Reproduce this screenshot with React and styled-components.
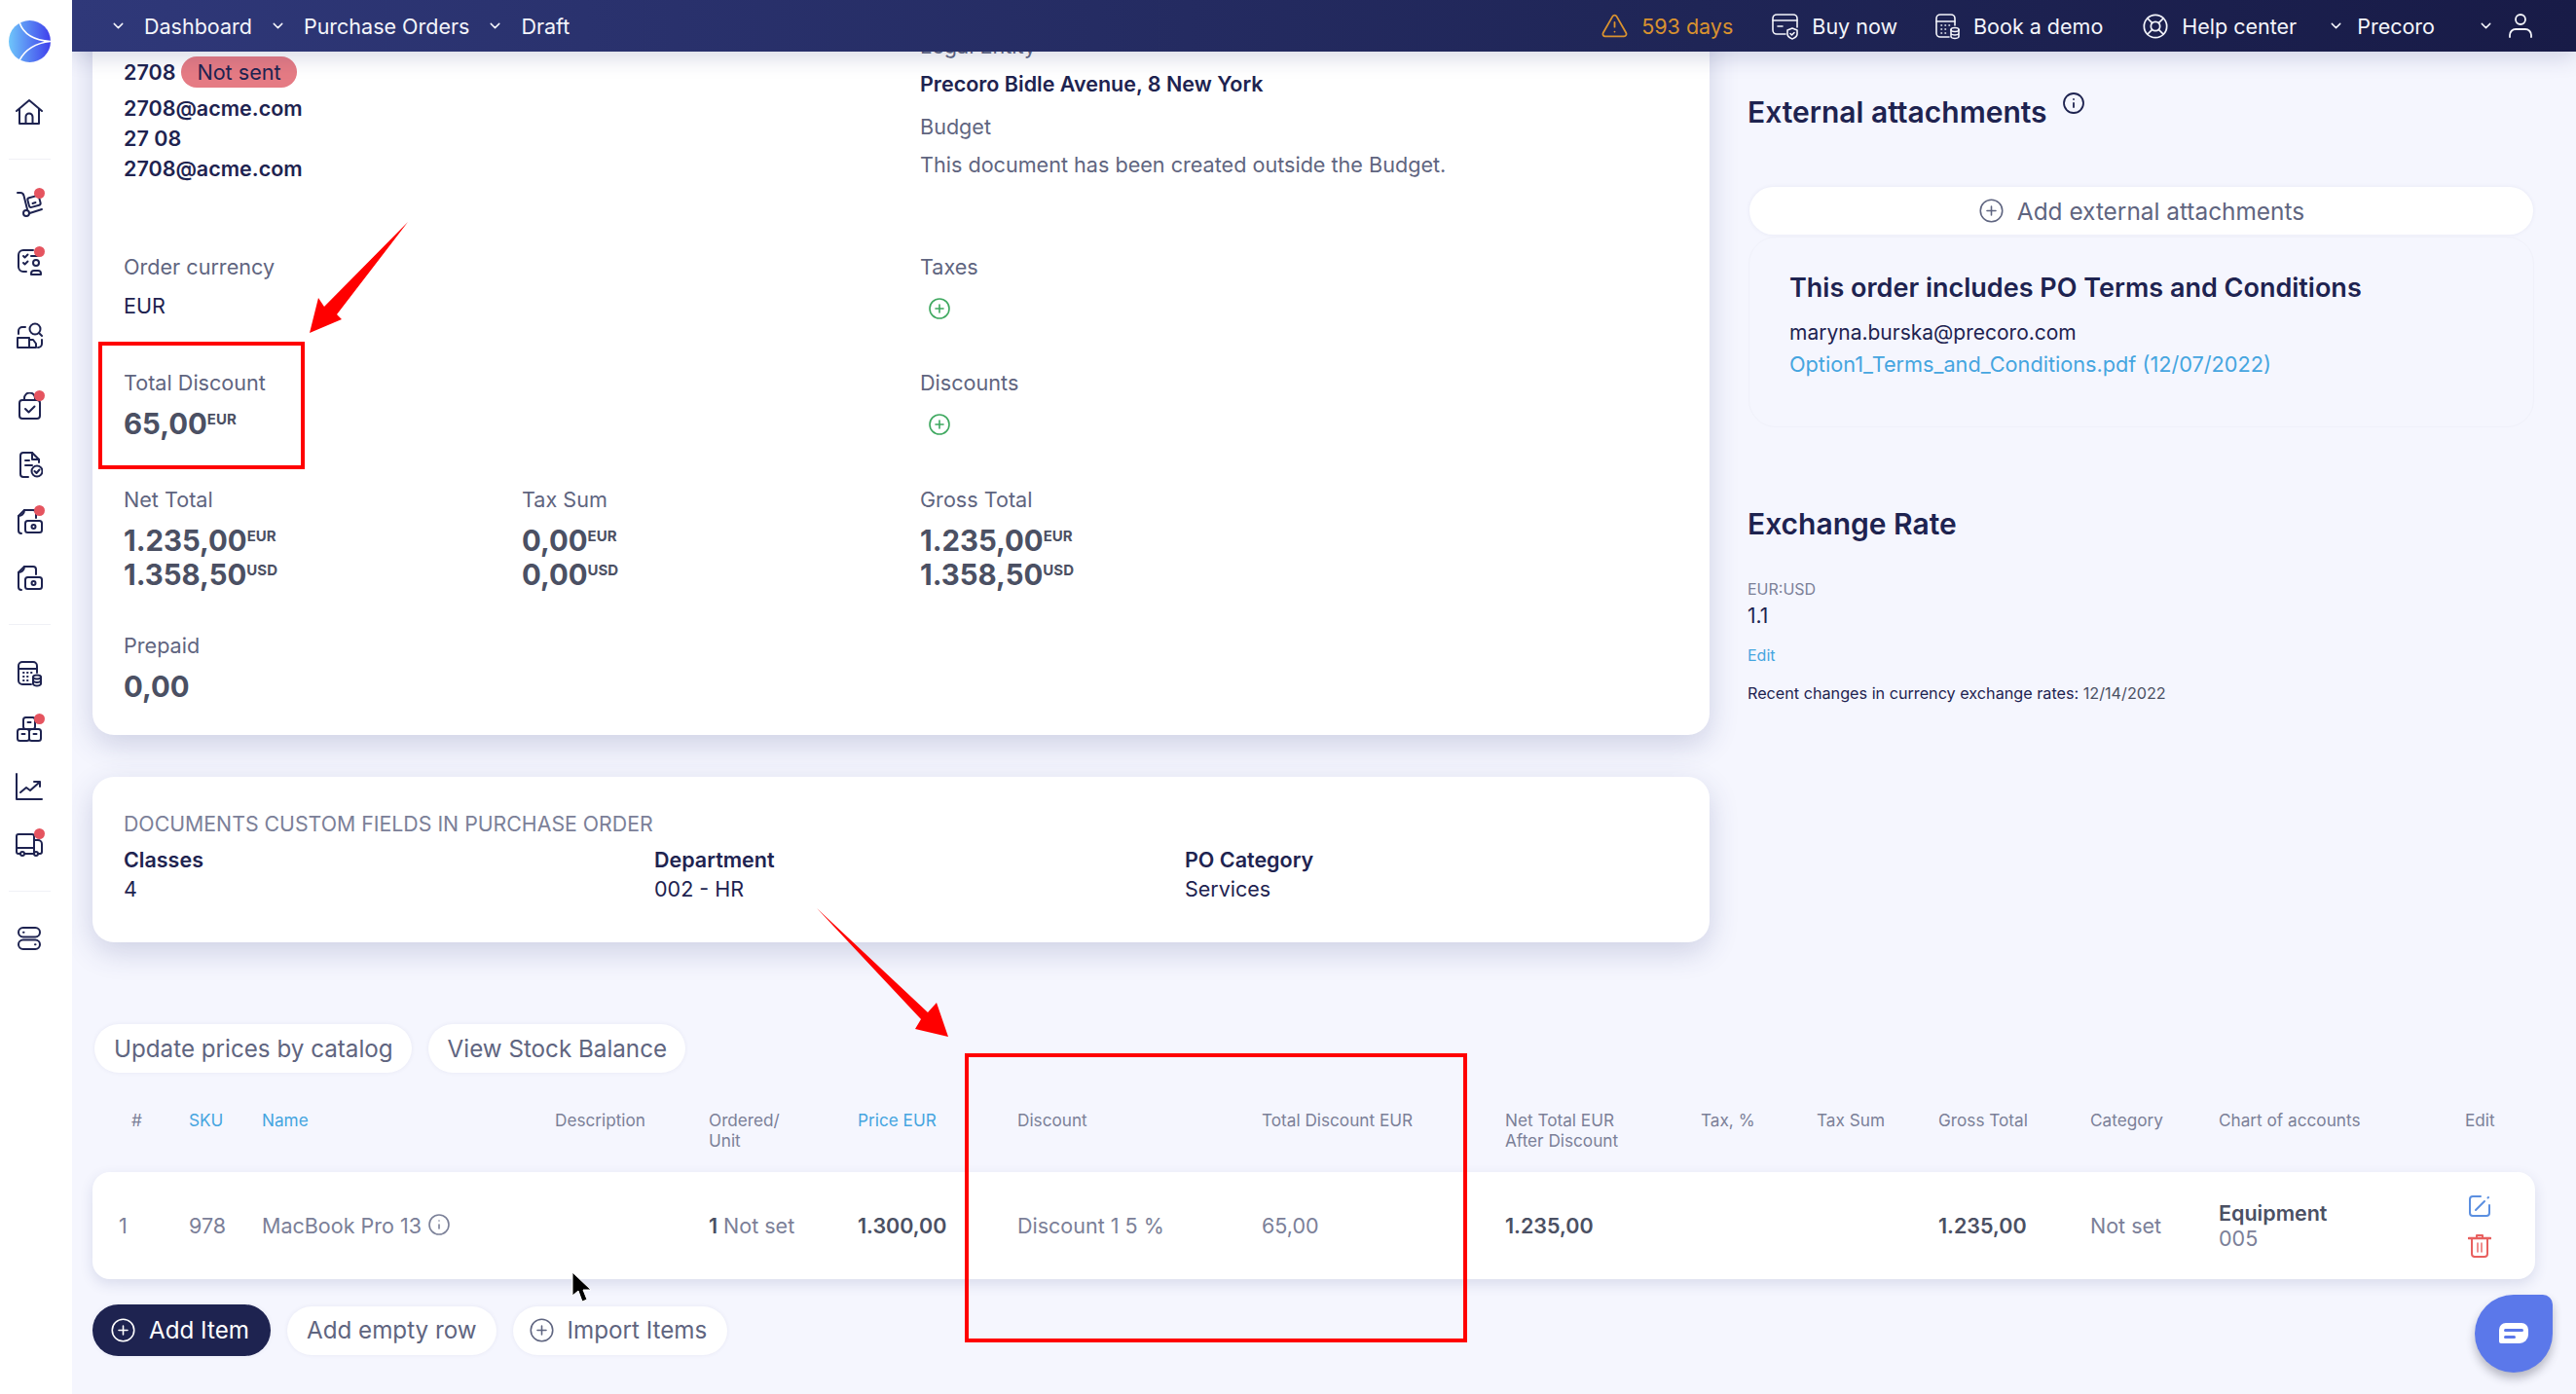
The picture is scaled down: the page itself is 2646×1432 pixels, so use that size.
import React from 'react';
import styled, { createGlobalStyle, css } from 'styled-components';
import { ChevronDown, CirclePlus, Info, TriangleAlert, LifeBuoy } from 'lucide-react';

const navy = '#1e2350';
const gray = '#5f6580';
const muted = '#7b8098';
const dark = '#4b5063';
const blue = '#45a5e0';

const GlobalStyle = createGlobalStyle`
  * { box-sizing: border-box; }
  html, body { margin: 0; padding: 0; background: #f5f6fe; }
  body { font-family: Inter, "Liberation Sans", sans-serif; color: ${navy}; }
`;

const Page = styled.div`
  position: relative;
  display: flex;
  width: 2646px;
  height: 1432px;
  overflow: hidden;
  background: #f5f6fe;
`;

/* sidebar */
const Sidebar = styled.aside`
  flex: 0 0 74px;
  display: flex;
  flex-direction: column;
  align-items: center;
  padding: 21px 14px 0 0;
  background: #fff;
  z-index: 6;
`;
const Logo = styled.svg`
  width: 43px;
  height: 43px;
  flex: none;
`;
const SideItem = styled.div`
  position: relative;
  flex: none;
  width: 28px;
  height: 28px;
  margin-top: ${(p) => p.$top}px;
  color: ${navy};
  svg { display: block; }
`;
const Dot = styled.span`
  position: absolute;
  top: -2px;
  right: -2px;
  width: 11px;
  height: 11px;
  border-radius: 50%;
  background: #e5545f;
`;
const SideRule = styled.div`
  flex: none;
  width: 43px;
  height: 1px;
  margin-top: ${(p) => p.$top}px;
  background: #f0f1f6;
`;

/* top bar */
const Main = styled.main`
  position: relative;
  flex: 1;
  min-width: 0;
  padding: 0 42px 0 21px;
`;
const TopBar = styled.header`
  position: absolute;
  top: 0;
  left: 0;
  right: 0;
  z-index: 5;
  height: 53px;
  display: flex;
  align-items: center;
  justify-content: space-between;
  padding: 0 44px 0 39px;
  color: #fff;
  font-size: 21.5px;
  white-space: nowrap;
  background: linear-gradient(90deg, #2f3879 0%, #1f2556 65%, #181b47 100%);
  box-shadow: 0 6px 22px rgba(40, 48, 110, 0.18);
`;
const Crumbs = styled.nav`
  display: flex;
  align-items: center;
  gap: 18px;
`;
const Crumb = styled.span`
  display: flex;
  align-items: center;
  gap: 18px;
  color: #f4f5fb;
`;
const TopRight = styled.div`
  display: flex;
  align-items: center;
  gap: 40px;
`;
const TopLink = styled.span`
  display: flex;
  align-items: center;
  gap: ${(p) => p.$gap || 13}px;
  margin-left: ${(p) => p.$left || 0}px;
  color: ${(p) => p.$color || '#f4f5fb'};
  svg { display: block; flex: none; }
`;

/* upper two columns */
const Columns = styled.div`
  display: grid;
  grid-template-columns: 1661px 809px;
  column-gap: 39px;
`;
const Card = styled.section`
  background: #fff;
  border-radius: ${(p) => p.$radius || '0 0 22px 22px'};
  padding-left: 32px;
  box-shadow: 0 10px 30px rgba(52, 62, 125, 0.2);
`;
const TopCard = styled(Card)`
  height: 755px;
`;
const CustomCard = styled(Card)`
  height: 170px;
  margin-top: 43px;
  padding-top: 33px;
`;
const Contact = styled.div`
  display: grid;
  grid-template-columns: 818px 1fr;
  height: 259px;
`;
const ContactCol = styled.div`
  padding-top: ${(p) => p.$top}px;
`;
const StrongLine = styled.div`
  display: flex;
  align-items: center;
  gap: 6px;
  font-size: 21.5px;
  font-weight: 600;
  line-height: 31px;
  margin-top: ${(p) => p.$top || 0}px;
`;
const Pill = styled.span`
  display: inline-block;
  height: 32px;
  padding: 0 16px;
  border-radius: 16px;
  background: #e57b84;
  font-weight: 400;
  line-height: 33px;
  font-size: 21.6px;
`;
const FieldRow = styled.div`
  display: grid;
  grid-template-columns: 409px 409px 1fr;
  margin-top: ${(p) => p.$top || 0}px;
`;
const Field = styled.div`
  grid-column: ${(p) => p.$col || 'auto'};
`;
const Label = styled.div`
  font-size: 21.6px;
  line-height: 30px;
  color: ${gray};
  margin-top: ${(p) => p.$top || 0}px;
`;
const Value = styled.div`
  font-size: 21.6px;
  line-height: 30px;
  margin-top: 10px;
`;
const Amounts = styled.div`
  margin-top: 10px;
`;
const Amount = styled.div`
  display: flex;
  align-items: flex-start;
  height: 35px;
  font-size: 29.4px;
  line-height: 35px;
  font-weight: 700;
  color: ${dark};
`;
const Cur = styled.span`
  font-size: 15px;
  line-height: 15px;
  font-weight: 700;
  margin: 5px 0 0 0;
`;
const GreenPlus = styled.div`
  margin: 16px 0 0 8px;
  color: #3ea85f;
  svg { display: block; width: 24px; height: 24px; }
`;
const CustomHead = styled.div`
  font-size: 21.3px;
  line-height: 30px;
  color: ${muted};
`;
const CustomGrid = styled.div`
  display: grid;
  grid-template-columns: 545px 545px 1fr;
  margin-top: 7px;
`;
const CustomName = styled.div`
  font-size: 21.5px;
  font-weight: 600;
  line-height: 30px;
`;
const CustomValue = styled.div`
  font-size: 21.5px;
  line-height: 31px;
`;

/* right column */
const Aside = styled.div`
  padding-top: 97px;
`;
const AsideTitle = styled.h2`
  display: flex;
  align-items: flex-start;
  margin: ${(p) => p.$top || 0}px 0 0;
  font-size: 30px;
  line-height: 36px;
  font-weight: 600;
  svg { margin: -3px 0 0 15px; width: 24px; height: 24px; }
`;
const AddWide = styled.div`
  display: flex;
  align-items: center;
  justify-content: center;
  gap: 13px;
  height: 49px;
  margin: 59px 2px 0 2px;
  border-radius: 25px;
  background: #fff;
  color: ${gray};
  font-size: 24.4px;
  box-shadow: 0 0 4px rgba(60, 70, 130, 0.08);
  svg { width: 27px; height: 27px; stroke-width: 1.4; }
`;
const Terms = styled.div`
  height: 196px;
  margin: 2px 1px 0 1px;
  padding: 35px 0 0 41px;
  border: 1px solid #f0f1fa;
  border-radius: 28px;
`;
const TermsTitle = styled.div`
  font-size: 27px;
  line-height: 34px;
  font-weight: 600;
`;
const TermsLine = styled.div`
  font-size: ${(p) => p.$size}px;
  line-height: 31px;
  margin-top: ${(p) => p.$top}px;
  color: ${(p) => p.$color || navy};
`;
const RateLabel = styled.div`
  margin-top: 39px;
  font-size: 16px;
  line-height: 20px;
  color: ${muted};
`;
const RateValue = styled.div`
  margin-top: 4px;
  font-size: 21px;
  line-height: 28px;
`;
const RateEdit = styled.div`
  margin-top: 16px;
  font-size: 16px;
  line-height: 20px;
  color: ${blue};
`;
const RateNote = styled.div`
  margin-top: 18px;
  font-size: 16.2px;
  line-height: 22px;
  span { color: ${dark}; }
`;

/* items */
const ActionRow = styled.div`
  display: flex;
  align-items: center;
  gap: ${(p) => p.$gap}px;
  margin: ${(p) => p.$top}px 0 0 ${(p) => p.$left || 0}px;
`;
const PillButton = styled.button`
  display: flex;
  align-items: center;
  gap: 13px;
  height: ${(p) => (p.$primary ? 53 : 50)}px;
  padding: ${(p) => p.$pad};
  border: 0;
  border-radius: 27px;
  font-family: inherit;
  font-size: 24.2px;
  color: ${(p) => (p.$primary ? '#fff' : gray)};
  background: ${(p) => (p.$primary ? navy : '#fff')};
  box-shadow: 0 0 4px rgba(60, 70, 130, 0.08);
  svg { width: 27px; height: 27px; stroke-width: 1.4; }
`;
const itemColumns = css`
  display: grid;
  grid-template-columns: 72px 75px 301px 158px 153px 164px 251px 250px 201px 119px 125px 156px 132px 253px 1fr;
  padding-left: 27px;
`;
const HeadRow = styled.div`
  ${itemColumns}
  height: 64px;
  margin-top: 38px;
`;
const HeadCell = styled.div`
  font-size: 17.2px;
  line-height: 21px;
  white-space: pre-line;
  color: ${(p) => (p.$sort ? blue : muted)};
  padding-left: ${(p) => p.$indent || 0}px;
`;
const ItemRow = styled.div`
  ${itemColumns}
  align-items: center;
  height: 110px;
  background: #fff;
  border-radius: 18px;
  box-shadow: 0 5px 14px rgba(52, 62, 125, 0.14);
`;
const Cell = styled.div`
  display: flex;
  align-items: center;
  gap: 6px;
  font-size: 21.5px;
  line-height: 26px;
  color: ${muted};
  svg { width: 24px; height: 24px; margin-top: -2px; }
  b { font-weight: 600; color: ${dark}; }
`;
const StackCell = styled.div`
  font-size: 21.5px;
  line-height: 26px;
  color: ${muted};
  b { display: block; font-weight: 600; color: ${dark}; }
`;
const EditCell = styled.div`
  display: flex;
  flex-direction: column;
  gap: 17px;
  padding-left: 3px;
  svg { display: block; width: 24px; height: 24px; }
`;

/* things lying over the page */
const ChatButton = styled.div`
  position: absolute;
  left: 2542px;
  top: 1330px;
  width: 80px;
  height: 80px;
  display: flex;
  align-items: center;
  justify-content: center;
  border-radius: 50% 10px 50% 50%;
  background: #5b78ea;
  box-shadow: 0 6px 10px rgba(40, 40, 60, 0.3);
  z-index: 7;
`;
const RedBox = styled.div`
  position: absolute;
  left: ${(p) => p.$x}px;
  top: ${(p) => p.$y}px;
  width: ${(p) => p.$w}px;
  height: ${(p) => p.$h}px;
  border: 4px solid #f00;
  z-index: 8;
`;
const Marks = styled.svg`
  position: absolute;
  inset: 0;
  width: 2646px;
  height: 1432px;
  pointer-events: none;
  z-index: 9;
`;

const Stroke = ({ children, width = 2 }) => (
  <svg width="28" height="28" viewBox="0 0 28 28" fill="none" stroke="currentColor" strokeWidth={width} strokeLinecap="round" strokeLinejoin="round">
    {children}
  </svg>
);

const CalcIcon = () => (
  <>
    <path d="M22 13V6a4 4 0 0 0-4-4H7a4 4 0 0 0-4 4v15a4 4 0 0 0 4 4h9" />
    <path d="M3 9h19" />
    <path d="M8 13h.5M12 13h.5M16 13h.5M8 17h.5M12 17h.5M8 21h.5M12 21h.5" />
    <ellipse cx="22" cy="17.5" rx="4" ry="2" />
    <path d="M18 17.5v7c0 1 2 2 4 2s4-1 4-2v-7M18 21c0 1 2 2 4 2s4-1 4-2" />
  </>
);

const FileMoney = () => (
  <>
    <path d="M6 27a3 3 0 0 1-3-3V9l6-6h9a3 3 0 0 1 3 3v5" />
    <path d="M3 9c3 0 6-2 6-6" />
    <rect x="10" y="14" width="17" height="12" rx="2.5" />
    <circle cx="18.5" cy="20" r="2" />
  </>
);

const sideIcons = [
  {
    top: 37,
    draw: (
      <>
        <path d="M1 13 14 2l13 11" />
        <path d="M4 11v15h20V11" />
        <path d="M10.5 26v-7a3.5 3.5 0 0 1 7 0v7" />
      </>
    ),
  },
  { rule: 34 },
  {
    top: 31,
    dot: true,
    draw: (
      <>
        <path d="M2 3h3c2 0 3 1 3.500 3L12 20" />
        <circle cx="11" cy="24" r="3" />
        <path d="M14.500 24 27 20" />
        <rect x="13" y="7" width="12" height="10" rx="2" transform="rotate(-15 19 12)" />
        <path d="M17.500 14l3-1" />
      </>
    ),
  },
  {
    top: 32,
    dot: true,
    draw: (
      <>
        <path d="M18 2H8a5 5 0 0 0-5 5v12a5 5 0 0 0 5 5h3" />
        <path d="M8 8l1.500 1.500 3-3M8 15l1.500 1.500 3-3M16 8h7" />
        <circle cx="21" cy="15" r="3" />
        <path d="M16 27v-1a3 3 0 0 1 3-3h4a3 3 0 0 1 3 3v1z" />
      </>
    ),
  },
  {
    top: 48,
    draw: (
      <>
        <path d="M3 12V9a4 4 0 0 1 4-4h3" />
        <circle cx="20" cy="7" r="5.500" />
        <path d="M24 11l3 3" />
        <path d="M2 16h12v10H2zM14 18h4l3 4v4h-7" />
        <path d="M27 18v4a4 4 0 0 1-4 4" />
      </>
    ),
  },
  {
    top: 44,
    dot: true,
    draw: (
      <>
        <rect x="4" y="8" width="21" height="19" rx="3" />
        <path d="M9 8V6a5 5 0 0 1 11 0v2" />
        <path d="M10 17l3.500 3.500 6-6" />
      </>
    ),
  },
  {
    top: 32,
    draw: (
      <>
        <path d="M13 27H8a3 3 0 0 1-3-3V5a3 3 0 0 1 3-3h9l7 7v3" />
        <path d="M17 2v7h7" />
        <path d="M10 10h4M10 15h7" />
        <circle cx="22" cy="21" r="5.500" />
        <path d="M19.500 21l2 2 3-3.500" />
      </>
    ),
  },
  { top: 30, dot: true, draw: <FileMoney /> },
  { top: 30, draw: <FileMoney /> },
  { rule: 34 },
  { top: 36, draw: <CalcIcon /> },
  {
    top: 29,
    dot: true,
    draw: (
      <>
        <rect x="8" y="2" width="12" height="12" rx="2.500" />
        <rect x="2" y="14" width="12" height="12" rx="2.500" />
        <rect x="14" y="14" width="12" height="12" rx="2.500" />
        <path d="M12.500 7h3M6.500 19h3M18.500 19h3" />
      </>
    ),
  },
  {
    top: 31,
    draw: (
      <>
        <path d="M1 1v26h26" />
        <path d="M5 20l6-5 4 3 9-8" />
        <path d="M19 9h6v5" />
      </>
    ),
  },
  {
    top: 31,
    dot: true,
    draw: (
      <>
        <path d="M5 24H3a2 2 0 0 1-2-2V6a2 2 0 0 1 2-2h14a2 2 0 0 1 2 2v18H9" />
        <path d="M1 18h18" />
        <path d="M19 10h4a4 4 0 0 1 4 4v8a2 2 0 0 1-2 2h-2M15 24h4" />
        <circle cx="7" cy="24" r="2" />
        <circle cx="21" cy="24" r="2" />
      </>
    ),
  },
  { rule: 34 },
  {
    top: 34,
    draw: (
      <>
        <rect x="3" y="3" width="22" height="9.500" rx="4.700" />
        <rect x="3" y="15.500" width="22" height="9.500" rx="4.700" />
        <path d="M8 7.700h.5M20 20.200h.5" />
      </>
    ),
  },
];

const itemHeads = [
  { text: '#', indent: 13 },
  { text: 'SKU', sort: true },
  { text: 'Name', sort: true },
  { text: 'Description' },
  { text: 'Ordered/\nUnit' },
  { text: 'Price EUR', sort: true },
  { text: 'Discount' },
  { text: 'Total Discount EUR' },
  { text: 'Net Total EUR\nAfter Discount' },
  { text: 'Tax, %' },
  { text: 'Tax Sum' },
  { text: 'Gross Total' },
  { text: 'Category' },
  { text: 'Chart of accounts' },
  { text: 'Edit' },
];

const AmountLines = ({ lines }) => (
  <Amounts>
    {lines.map(([num, cur]) => (
      <Amount key={cur}>
        {num}
        <Cur>{cur}</Cur>
      </Amount>
    ))}
  </Amounts>
);

const App = () => (
  <Page>
    <GlobalStyle />
    <Sidebar>
      <Logo viewBox="0 0 43 43">
        <defs>
          <linearGradient id="logoFill" x1="0" y1="0" x2="1" y2="0">
            <stop offset="0" stopColor="#6fc6fa" />
            <stop offset="1" stopColor="#3f3fec" />
          </linearGradient>
        </defs>
        <circle cx="21.500" cy="21.500" r="21.500" fill="url(#logoFill)" />
        <path d="M11 2Q17 20 43 21.500Q20 24 11 41" fill="none" stroke="#fff" strokeWidth="1.600" />
      </Logo>
      {sideIcons.map((item, i) =>
        item.rule ? (
          <SideRule key={i} $top={item.rule} />
        ) : (
          <SideItem key={i} $top={item.top}>
            <Stroke>{item.draw}</Stroke>
            {item.dot && <Dot />}
          </SideItem>
        )
      )}
    </Sidebar>

    <Main>
      <TopBar>
        <Crumbs>
          {['Dashboard', 'Purchase Orders', 'Draft'].map((name) => (
            <Crumb key={name}>
              <ChevronDown size={17} />
              {name}
            </Crumb>
          ))}
        </Crumbs>
        <TopRight>
          <TopLink $color="#d9922f">
            <TriangleAlert size={29} strokeWidth={1.5} />
            593 days
          </TopLink>
          <TopLink>
            <Stroke width={1.6}>
              <path d="M14 22H5a4 4 0 0 1-4-4V6a4 4 0 0 1 4-4h17a4 4 0 0 1 4 4v9" />
              <path d="M1 8h25M6 14h5" />
              <path d="M21 16l5 2v4c0 3-3 4-5 5-2-1-5-2-5-5v-4z" />
              <path d="M19 21.500l1.500 1.500 2.500-2.500" />
            </Stroke>
            Buy now
          </TopLink>
          <TopLink $left={-3}>
            <Stroke width={1.6}>
              <CalcIcon />
            </Stroke>
            Book a demo
          </TopLink>
          <TopLink>
            <LifeBuoy size={28} strokeWidth={1.5} />
            Help center
          </TopLink>
          <TopLink $left={-8}>
            <ChevronDown size={17} />
            Precoro
          </TopLink>
          <TopLink $left={4} $gap={14}>
            <ChevronDown size={17} />
            <svg width="26" height="28" viewBox="0 0 26 28" fill="none" stroke="currentColor" strokeWidth="1.800" strokeLinecap="round">
              <circle cx="13" cy="7" r="5" />
              <path d="M2 25v-2a6 6 0 0 1 6-6h10a6 6 0 0 1 6 6v2" />
            </svg>
          </TopLink>
        </TopRight>
      </TopBar>

      <Columns>
        <div>
          <TopCard>
            <Contact>
              <ContactCol $top={58}>
                <StrongLine>
                  2708
                  <Pill>Not sent</Pill>
                </StrongLine>
                <StrongLine $top={6}>2708@acme.com</StrongLine>
                <StrongLine>27 08</StrongLine>
                <StrongLine>2708@acme.com</StrongLine>
              </ContactCol>
              <ContactCol $top={32}>
                <Label>Legal Entity</Label>
                <StrongLine $top={9}>Precoro Bidle Avenue, 8 New York</StrongLine>
                <Label $top={13}>Budget</Label>
                <Label $top={9}>This document has been created outside the Budget.</Label>
              </ContactCol>
            </Contact>
            <FieldRow>
              <Field>
                <Label>Order currency</Label>
                <Value>EUR</Value>
              </Field>
              <Field $col={3}>
                <Label>Taxes</Label>
                <GreenPlus>
                  <CirclePlus strokeWidth={1.6} />
                </GreenPlus>
              </Field>
            </FieldRow>
            <FieldRow $top={49}>
              <Field>
                <Label>Total Discount</Label>
                <AmountLines lines={[['65,00', 'EUR']]} />
              </Field>
              <Field $col={3}>
                <Label>Discounts</Label>
                <GreenPlus>
                  <CirclePlus strokeWidth={1.6} />
                </GreenPlus>
              </Field>
            </FieldRow>
            <FieldRow $top={45}>
              <Field>
                <Label>Net Total</Label>
                <AmountLines lines={[['1.235,00', 'EUR'], ['1.358,50', 'USD']]} />
              </Field>
              <Field>
                <Label>Tax Sum</Label>
                <AmountLines lines={[['0,00', 'EUR'], ['0,00', 'USD']]} />
              </Field>
              <Field>
                <Label>Gross Total</Label>
                <AmountLines lines={[['1.235,00', 'EUR'], ['1.358,50', 'USD']]} />
              </Field>
            </FieldRow>
            <FieldRow $top={40}>
              <Field>
                <Label>Prepaid</Label>
                <AmountLines lines={[['0,00', '']]} />
              </Field>
            </FieldRow>
          </TopCard>
          <CustomCard $radius="22px">
            <CustomHead>DOCUMENTS CUSTOM FIELDS IN PURCHASE ORDER</CustomHead>
            <CustomGrid>
              <div>
                <CustomName>Classes</CustomName>
                <CustomValue>4</CustomValue>
              </div>
              <div>
                <CustomName>Department</CustomName>
                <CustomValue>002 - HR</CustomValue>
              </div>
              <div>
                <CustomName>PO Category</CustomName>
                <CustomValue>Services</CustomValue>
              </div>
            </CustomGrid>
          </CustomCard>
        </div>

        <Aside>
          <AsideTitle>
            External attachments
            <Info strokeWidth={1.8} />
          </AsideTitle>
          <AddWide>
            <CirclePlus />
            Add external attachments
          </AddWide>
          <Terms>
            <TermsTitle>This order includes PO Terms and Conditions</TermsTitle>
            <TermsLine $top={13} $size={21}>maryna.burska@precoro.com</TermsLine>
            <TermsLine $top={2} $size={21.7} $color={blue}>
              Option1_Terms_and_Conditions.pdf (12/07/2022)
            </TermsLine>
          </Terms>
          <AsideTitle $top={81}>Exchange Rate</AsideTitle>
          <RateLabel>EUR:USD</RateLabel>
          <RateValue>1.1</RateValue>
          <RateEdit>Edit</RateEdit>
          <RateNote>
            Recent changes in currency exchange rates: <span>12/14/2022</span>
          </RateNote>
        </Aside>
      </Columns>

      <ActionRow $gap={17} $top={84} $left={2}>
        <PillButton $pad="0 19px 0 20px">Update prices by catalog</PillButton>
        <PillButton $pad="0 19px 0 20px">View Stock Balance</PillButton>
      </ActionRow>

      <HeadRow>
        {itemHeads.map((h) => (
          <HeadCell key={h.text} $sort={h.sort} $indent={h.indent}>
            {h.text}
          </HeadCell>
        ))}
      </HeadRow>
      <ItemRow>
        <Cell>1</Cell>
        <Cell>978</Cell>
        <Cell>
          MacBook Pro 13
          <Info strokeWidth={1.6} />
        </Cell>
        <Cell />
        <Cell>
          <b>1</b> Not set
        </Cell>
        <Cell>
          <b>1.300,00</b>
        </Cell>
        <Cell>Discount 1 5 %</Cell>
        <Cell>65,00</Cell>
        <Cell>
          <b>1.235,00</b>
        </Cell>
        <Cell />
        <Cell />
        <Cell>
          <b>1.235,00</b>
        </Cell>
        <Cell>Not set</Cell>
        <StackCell>
          <b>Equipment</b>
          005
        </StackCell>
        <EditCell>
          <svg viewBox="0 0 24 24" fill="none" stroke="#5b8fe0" strokeWidth="2" strokeLinecap="round" strokeLinejoin="round">
            <path d="M13 2H5a3 3 0 0 0-3 3v14a3 3 0 0 0 3 3h14a3 3 0 0 0 3-3v-8" />
            <path d="M8 16l9-9M20.500 3.500l.5-.5" />
          </svg>
          <svg viewBox="0 0 24 24" fill="none" stroke="#e8605f" strokeWidth="2" strokeLinecap="round" strokeLinejoin="round">
            <path d="M1 4h22" strokeWidth="2.600" />
            <path d="M9 3V1h6v2" />
            <path d="M4 4v16a3 3 0 0 0 3 3h10a3 3 0 0 0 3-3V4" />
            <path d="M10 9v9M14 9v9" strokeWidth="1.400" />
          </svg>
        </EditCell>
      </ItemRow>

      <ActionRow $gap={17} $top={26}>
        <PillButton $primary $pad="0 22px 0 18px">
          <CirclePlus />
          Add Item
        </PillButton>
        <PillButton $pad="0 20px">Add empty row</PillButton>
        <PillButton $pad="0 21px 0 16px">
          <CirclePlus />
          Import Items
        </PillButton>
      </ActionRow>
    </Main>

    <ChatButton>
      <svg width="30" height="22" viewBox="0 0 30 22">
        <path d="M7 0h16a7 7 0 0 1 7 7v5a9 9 0 0 1-9 9H2a2 2 0 0 1-2-2V7a7 7 0 0 1 7-7z" fill="#fff" />
        <rect x="5" y="6" width="20" height="3" rx="1.500" fill="#5b78ea" />
        <rect x="5" y="13" width="12" height="3" rx="1.500" fill="#5b78ea" />
      </svg>
    </ChatButton>

    <RedBox $x={101} $y={351} $w={212} $h={131} />
    <RedBox $x={991} $y={1082} $w={516} $h={297} />
    <Marks viewBox="0 0 2646 1432">
      <polygon points="419,228 346,323 351,328 318,342 327,306 333,315" fill="#f00" />
      <polygon points="839,933 953,1040 962,1030 974,1065 940,1057 946,1047" fill="#f00" />
      <polygon points="588,1307 588,1331 594,1326 598,1337 603,1335 599,1325 607,1325" fill="#000" stroke="#fff" strokeWidth="1" />
    </Marks>
  </Page>
);

export default App;
